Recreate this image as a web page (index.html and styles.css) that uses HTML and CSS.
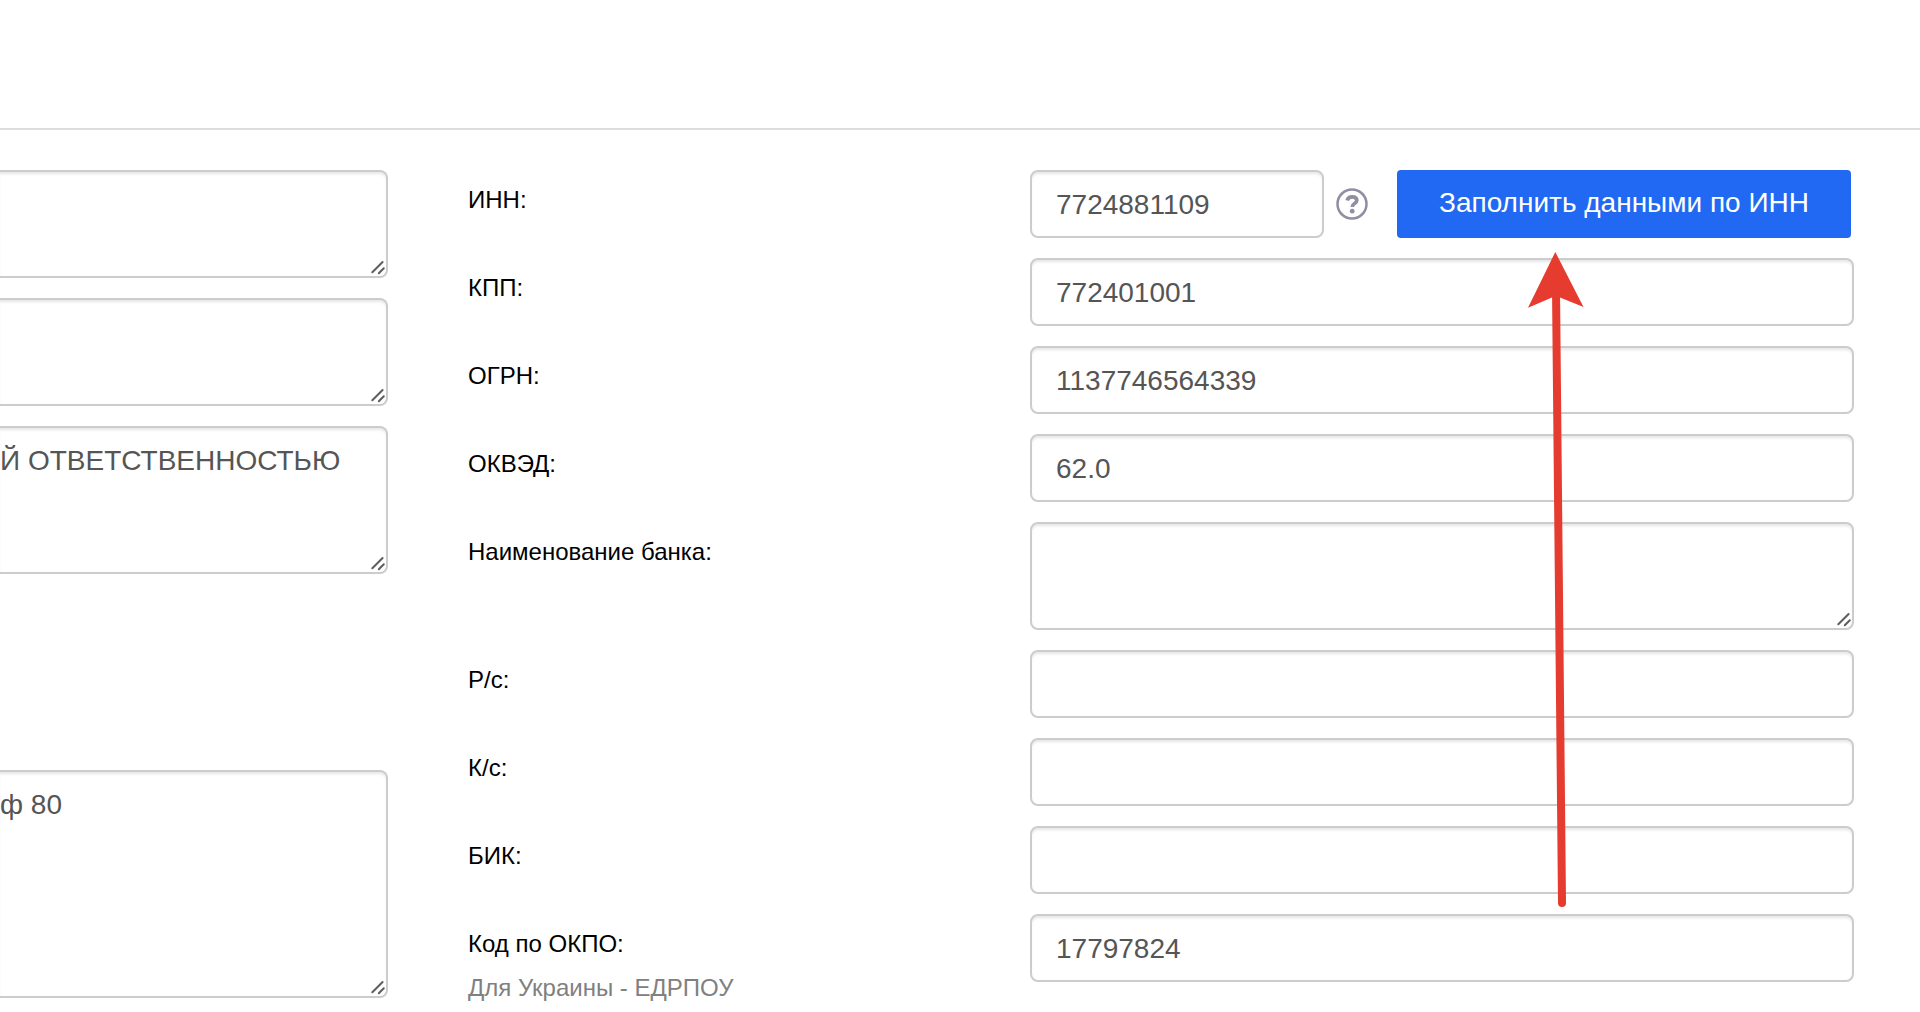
FILE: index.html
```html
<!DOCTYPE html>
<html lang="ru">
<head>
    <meta charset="UTF-8">
    <meta name="viewport" content="width=device-width, initial-scale=1.0">
    <title>Реквизиты компании</title>
    <link rel="stylesheet" href="styles.css">
</head>
<body>
    <svg class="sprite" aria-hidden="true">
        <symbol id="grip" viewBox="0 0 16 16">
            <path d="M2.300 12.300L12.600 2M8.800 13.300L13.800 8.300" fill="none" stroke="#5e5e5e" stroke-width="2" stroke-linecap="round"/>
        </symbol>
    </svg>

    <header class="header"></header>

    <form class="requisites">
        <div class="names">
            <div class="area">
                <textarea class="control" aria-label="Название"></textarea>
                <svg class="grip"><use href="#grip"/></svg>
            </div>
            <div class="area">
                <textarea class="control" aria-label="Краткое название"></textarea>
                <svg class="grip"><use href="#grip"/></svg>
            </div>
            <div class="area">
                <textarea class="control medium" aria-label="Полное название">Й ОТВЕТСТВЕННОСТЬЮ</textarea>
                <svg class="grip"><use href="#grip"/></svg>
            </div>
            <div class="area address">
                <textarea class="control large" aria-label="Адрес">ф 80</textarea>
                <svg class="grip"><use href="#grip"/></svg>
            </div>
        </div>

        <div class="details">
            <div class="row">
                <label class="label" for="inn">ИНН:</label>
                <div class="field">
                    <input class="control inn" type="text" id="inn" value="7724881109">
                    <button class="help" type="button" aria-label="Справка">
                        <svg width="32" height="32" viewBox="0 0 32 32" fill="none" stroke="#918da3">
                            <circle cx="16" cy="16" r="14.500" stroke-width="2.500"/>
                            <path d="M11.200 12.500C11.800 10 13.500 8.900 16.200 8.900C19 8.900 20.800 10.300 20.800 12.600C20.800 15.600 16.200 15.500 16.200 18.900" stroke-width="3.700"/>
                            <circle cx="16.200" cy="23.200" r="2.400" fill="#918da3" stroke="none"/>
                        </svg>
                    </button>
                    <button class="fill-button" type="button">Заполнить данными по ИНН</button>
                </div>
            </div>
            <div class="row">
                <label class="label" for="kpp">КПП:</label>
                <div class="field"><input class="control" type="text" id="kpp" value="772401001"></div>
            </div>
            <div class="row">
                <label class="label" for="ogrn">ОГРН:</label>
                <div class="field"><input class="control" type="text" id="ogrn" value="1137746564339"></div>
            </div>
            <div class="row">
                <label class="label" for="okved">ОКВЭД:</label>
                <div class="field"><input class="control" type="text" id="okved" value="62.0"></div>
            </div>
            <div class="row">
                <label class="label" for="bank">Наименование банка:</label>
                <div class="field area">
                    <textarea class="control" id="bank"></textarea>
                    <svg class="grip"><use href="#grip"/></svg>
                </div>
            </div>
            <div class="row">
                <label class="label" for="rs">Р/с:</label>
                <div class="field"><input class="control" type="text" id="rs"></div>
            </div>
            <div class="row">
                <label class="label" for="ks">К/с:</label>
                <div class="field"><input class="control" type="text" id="ks"></div>
            </div>
            <div class="row">
                <label class="label" for="bik">БИК:</label>
                <div class="field"><input class="control" type="text" id="bik"></div>
            </div>
            <div class="row">
                <label class="label" for="okpo">Код по ОКПО:<span class="hint">Для Украины - ЕДРПОУ</span></label>
                <div class="field"><input class="control" type="text" id="okpo" value="17797824"></div>
            </div>

            <!-- стрелка к кнопке заполнения -->
            <svg class="arrow" width="56" height="656" viewBox="0 0 56 656" aria-hidden="true">
                <path d="M28 36L34 651" stroke="#e63c30" stroke-width="8" stroke-linecap="round"/>
                <path d="M27.300 0L55.500 55L32 45.500H24L0 55.700Z" fill="#e63c30"/>
            </svg>
        </div>
    </form>
</body>
</html>
```

FILE: styles.css
```css
* {
    box-sizing: border-box;
}

body {
    margin: 0;
    background: #fff;
    color: #000;
    font-family: "Liberation Sans", Arial, sans-serif;
    font-size: 24px;
}

.sprite {
    display: none;
}

.header {
    height: 130px;
    border-bottom: 2px solid #dcdcdc;
}

.requisites {
    display: flex;
    gap: 80px;
    padding: 40px 66px 0 0;
}

.names {
    display: flex;
    flex-direction: column;
    gap: 20px;
    width: 388px;
    flex-shrink: 0;
}

.details {
    position: relative;
    display: flex;
    flex-direction: column;
    gap: 20px;
    flex: 1;
}

.row {
    display: grid;
    grid-template-columns: 281fr 412fr;
    align-items: start;
}

.label {
    padding-top: 8px;
    line-height: 44px;
}

.hint {
    display: block;
    color: #808080;
}

.field {
    display: flex;
    align-items: center;
}

.control {
    display: block;
    width: 100%;
    height: 68px;
    margin: 0;
    padding: 2px 24px 0;
    border: 2px solid #ccc;
    border-radius: 8px;
    background: #fff;
    box-shadow: inset 0 3px 3px -1px rgba(0, 0, 0, 0.1);
    color: #555;
    font-family: inherit;
    font-size: 28px;
    line-height: 32px;
}

textarea.control {
    height: 108px;
    padding: 17px 24px;
    resize: none;
    overflow: hidden;
}

textarea.medium {
    height: 148px;
}

textarea.large {
    height: 228px;
}

.names .control {
    padding-left: 0;
    border-left: 0;
    border-radius: 0 8px 8px 0;
}

.address {
    margin-top: 176px;
}

.area {
    position: relative;
}

.grip {
    position: absolute;
    right: 2px;
    bottom: 2px;
    width: 16px;
    height: 16px;
    pointer-events: none;
}

.inn {
    width: 294px;
}

.help {
    display: flex;
    margin: 0 29px 0 12px;
    padding: 0;
    border: 0;
    background: none;
    cursor: pointer;
}

.fill-button {
    width: 454px;
    height: 68px;
    padding: 0 0 2px;
    border: 0;
    border-radius: 4px;
    background: #2169f3;
    color: #fff;
    font-family: inherit;
    font-size: 28px;
    white-space: nowrap;
    cursor: pointer;
}

.arrow {
    position: absolute;
    top: 82px;
    right: 270px;
    pointer-events: none;
}
```
